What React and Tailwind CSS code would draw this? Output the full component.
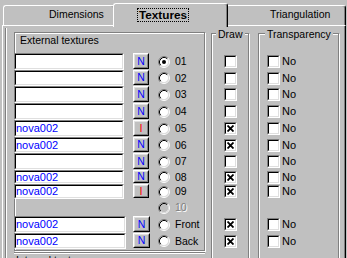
import React from 'react';

// Texture settings page of an old Win9x-style dialog (tab "Textures").
const rows = [
  { label: '01', h: 'h-[17px]', field: '', btn: 'N', on: true, draw: false },
  { label: '02', h: 'h-[16px]', field: '', btn: 'N', draw: false },
  { label: '03', h: 'h-[17px]', field: '', btn: 'N', draw: false },
  { label: '04', h: 'h-[17px]', field: '', btn: 'N', draw: false },
  { label: '05', h: 'h-[17px]', field: 'nova002', btn: 'I', draw: true },
  { label: '06', h: 'h-[16px]', field: 'nova002', btn: 'N', draw: true },
  { label: '07', h: 'h-[17px]', field: '', btn: 'N', draw: false },
  { label: '08', h: 'h-[14px]', field: 'nova002', btn: 'N', draw: true },
  { label: '09', h: 'h-[15px]', field: 'nova002', btn: 'I', draw: true },
  { label: '10', h: 'h-[17px]', field: null, disabled: true },
  { label: 'Front', h: 'h-[17px]', field: 'nova002', btn: 'N', draw: true, wide: true },
  { label: 'Back', h: 'h-[16px]', field: 'nova002', btn: 'N', draw: true, wide: true },
];

const Sunken = ({ className = '', children }) => (
  <div className={`border border-b-white border-l-[#808080] border-r-white border-t-[#808080] ${className}`}>
    <div className="flex h-full w-full items-center border border-b-[#dfdfdf] border-l-black border-r-[#dfdfdf] border-t-black bg-white">
      {children}
    </div>
  </div>
);

const Cross = () => (
  <svg width="7" height="7" viewBox="0 0 7 7" className="mx-auto">
    <path d="M0.5 0.5L6.5 6.5M6.5 0.5L0.5 6.5" stroke="#000" strokeWidth="1.8" />
  </svg>
);

const CheckBox = ({ checked }) => (
  <Sunken className="h-[13px] w-[13px] shrink-0">{checked && <Cross />}</Sunken>
);

const Radio = ({ on, disabled }) => (
  <svg width="12" height="12" viewBox="0 0 12 12" className="shrink-0">
    <circle cx="6" cy="6" r="4.5" fill={disabled ? '#c0c0c0' : '#fff'} />
    <path d="M2.11 9.89A5.5 5.5 0 0 1 9.89 2.11" stroke="#808080" fill="none" />
    <path d="M9.89 2.11A5.5 5.5 0 0 1 2.11 9.89" stroke="#fff" fill="none" />
    <path d="M2.82 9.18A4.5 4.5 0 0 1 9.18 2.82" stroke="#000" fill="none" />
    <path d="M9.18 2.82A4.5 4.5 0 0 1 2.82 9.18" stroke="#dfdfdf" fill="none" />
    {on && <circle cx="6" cy="6" r="2" fill="#000" />}
  </svg>
);

const SmallButton = ({ kind, wide }) => (
  <div className={`mb-[1px] self-stretch border border-b-black border-l-white border-r-black border-t-white ${wide ? 'w-[17px]' : 'w-[16px]'}`}>
    <div className="flex h-full items-center justify-center border border-b-[#808080] border-l-[#dfdfdf] border-r-[#808080] border-t-[#dfdfdf] leading-none">
      {kind === 'N' ? <span className="text-[10.5px] text-[#0000ff]">N</span> : <span className="text-[11px] text-[#ff0000]">I</span>}
    </div>
  </div>
);

const GroupBox = ({ title, className, labelLeft, children }) => (
  <div className={`relative border border-[#808080] shadow-[inset_1px_1px_0_#fff,1px_1px_0_#fff] ${className}`}>
    <span className={`absolute top-[-6px] bg-[#c0c0c0] px-[2px] leading-[12px] ${labelLeft}`}>{title}</span>
    {children}
  </div>
);

export default function App() {
  return (
    <div className="h-[258px] w-[347px] overflow-hidden bg-[#c0c0c0] font-['Liberation_Sans',Arial,sans-serif] text-[10.5px] text-black">
      {/* tab strip */}
      <div className="flex h-[25px] items-end pl-[3px]">
        <div className="flex h-[20px] w-[112px] items-center rounded-t-[3px] border-l border-r border-t border-l-white border-r-black border-t-white pb-[1px] pl-[45px] shadow-[inset_-1px_0_0_#808080]">
          Dimensions
        </div>
        <div className="relative z-10 -mb-[2px] -ml-[2px] flex h-[24px] w-[115px] items-start rounded-t-[3px] border-l border-r border-t border-l-white border-r-black border-t-white bg-[#c0c0c0] pl-[23px] shadow-[inset_-1px_0_0_#808080]">
          <span className="mt-[4px] border border-dotted border-black px-[1px] text-[11.75px] font-bold leading-[12px]">Textures</span>
        </div>
        <div className="-ml-[2px] flex h-[20px] w-[120px] items-center rounded-t-[3px] border-l border-r border-t border-l-white border-r-black border-t-white pb-[1px] pl-[43px] shadow-[inset_-1px_0_0_#808080]">
          Triangulation
        </div>
      </div>

      {/* page */}
      <div className="ml-[2px] mr-[1px] flex h-[233px] border-l border-r border-t border-l-white border-r-black border-t-white shadow-[inset_-1px_0_0_#808080]">
        <div className="ml-[2px] mt-[2px] flex flex-1 items-start border-l border-l-[#808080] shadow-[inset_1px_0_0_#fff]">
          <div className="ml-[8px] mt-[4px] flex flex-col">
            <div className="h-[219px] w-[191px] border border-[#808080] shadow-[inset_1px_1px_0_#fff,1px_1px_0_#fff]">
              <div className="pl-[5px] pt-[1px] leading-[12px]">External textures</div>
              <div className="-ml-[1px] mt-[7px] flex flex-col">
                {rows.map((r) => (
                  <div key={r.label} className={`flex items-center ${r.h}`}>
                    {r.field === null ? (
                      <div className="w-[144px]" />
                    ) : (
                      <>
                        <Sunken className={`h-full ${r.wide ? 'w-[112px]' : 'w-[110px]'}`}>
                          <span className="text-[11px] leading-none text-[#0000ff]">{r.field}</span>
                        </Sunken>
                        <div className={r.wide ? 'w-[7px]' : 'w-[9px]'} />
                        <SmallButton kind={r.btn} wide={r.wide} />
                        <div className={r.wide ? 'w-[8px]' : 'w-[9px]'} />
                      </>
                    )}
                    <Radio on={r.on} disabled={r.disabled} />
                    <span className={`ml-[5px] leading-none ${r.disabled ? 'text-[#808080] [text-shadow:1px_1px_0_#fff]' : ''}`}>
                      {r.label}
                    </span>
                  </div>
                ))}
              </div>
            </div>
            <div className="mt-[1px] w-[191px] border-t border-t-[#808080] shadow-[inset_0_1px_0_#fff]">
              <div className="pl-[2px] pt-[1px] leading-[12px]">Internal textures</div>
            </div>
          </div>

          <GroupBox title="Draw" className="ml-[6px] mt-[5px] h-[240px] w-[38px]" labelLeft="left-[4px]">
            <div className="mt-[19px] flex flex-col pl-[12px]">
              {rows.map((r) => (
                <div key={r.label} className={`flex items-center ${r.h}`}>
                  {!r.disabled && <CheckBox checked={r.draw} />}
                </div>
              ))}
            </div>
          </GroupBox>

          <GroupBox title="Transparency" className="ml-[9px] mt-[5px] h-[240px] w-[81px]" labelLeft="left-[6px]">
            <div className="mt-[19px] flex flex-col pl-[8px]">
              {rows.map((r) => (
                <div key={r.label} className={`flex items-center ${r.h}`}>
                  {!r.disabled && (
                    <>
                      <CheckBox checked={false} />
                      <span className="ml-[2px] text-[11px] leading-none">No</span>
                    </>
                  )}
                </div>
              ))}
            </div>
          </GroupBox>
        </div>
      </div>
    </div>
  );
}
